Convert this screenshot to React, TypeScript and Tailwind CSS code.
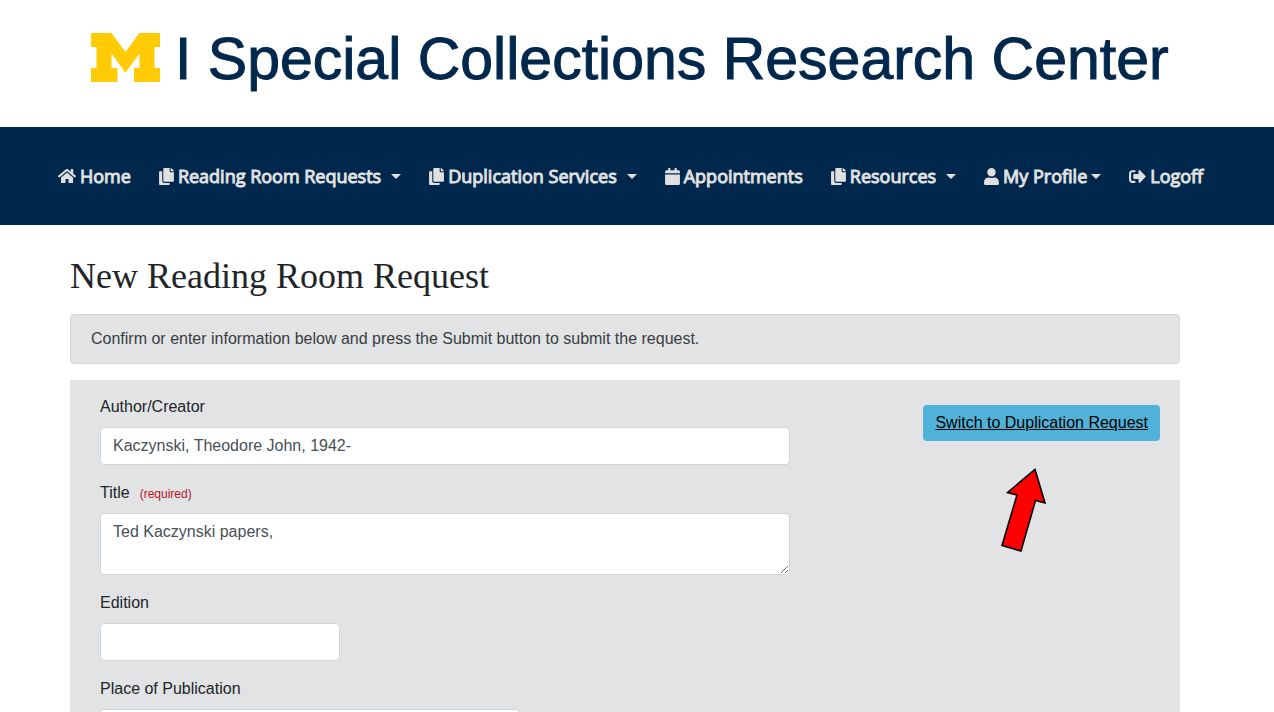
import React, { useState } from 'react';
import {
  FaHome,
  FaCopy,
  FaCalendar,
  FaUser,
  FaSignOutAlt,
} from 'react-icons/fa';
import type { IconType } from 'react-icons';

interface NavItem {
  label: string;
  icon: IconType;
  iconClass: string;
  caret?: string;
}

const navItems: NavItem[] = [
  { label: 'Home', icon: FaHome, iconClass: 'mr-1 h-4 w-[18px]' },
  { label: 'Reading Room Requests', icon: FaCopy, iconClass: 'mr-1 h-[17px] w-[15px]', caret: 'ml-[10px]' },
  { label: 'Duplication Services', icon: FaCopy, iconClass: 'mr-1 h-[17px] w-[15px]', caret: 'ml-[10px]' },
  { label: 'Appointments', icon: FaCalendar, iconClass: 'mr-1 h-[17px] w-[15px]' },
  { label: 'Resources', icon: FaCopy, iconClass: 'mr-1 h-[17px] w-[15px]', caret: 'ml-[10px]' },
  { label: 'My Profile', icon: FaUser, iconClass: 'mr-1 h-[17px] w-[15px]', caret: 'ml-1' },
  { label: 'Logoff', icon: FaSignOutAlt, iconClass: 'mr-1 h-[17px] w-[17px]' },
];

const inputClass =
  'block h-[38px] rounded border border-[#ced4da] bg-white px-3 text-base leading-6 text-[#495057]';

function BlockM() {
  return (
    <svg viewBox="0 0 69 49" className="h-[49px] w-[69px] shrink-0" aria-hidden="true">
      <path
        fill="#ffcb05"
        d="M0 0H20.500L34.500 19L48.500 0H69V14H63.500V35H69V49H43V35H48.500V20.500L34.500 39.700L20.500 20.500V35H26.500V49H0V35H5.500V14H0Z"
      />
    </svg>
  );
}

function SiteHeader() {
  return (
    <header className="flex h-[127px] items-start pl-[91px] pt-[33px]">
      <a href="#home" className="flex items-start gap-[15px] font-['Liberation_Sans',sans-serif] text-[59px] leading-[52px] whitespace-nowrap text-[#00274c]">
        <BlockM />
        <span className="[-webkit-text-stroke:1px_#00274c]">I Special Collections Research Center</span>
      </a>
    </header>
  );
}

function NavBar() {
  return (
    <nav className="flex h-[98px] items-center gap-7 bg-[#00274c] pl-[58px] font-['Open_Sans',sans-serif] text-lg text-[#e0e0e0]">
      {navItems.map((item) => {
        const Icon = item.icon;
        return (
          <a key={item.label} href="#" className="flex items-center whitespace-nowrap">
            <Icon className={item.iconClass} />
            <span className="[-webkit-text-stroke:1px_#e0e0e0]">{item.label}</span>
            {item.caret && (
              <span className={`${item.caret} border-x-[5px] border-t-[5px] border-x-transparent border-t-[#e0e0e0]`} />
            )}
          </a>
        );
      })}
    </nav>
  );
}

export default function App() {
  const [author, setAuthor] = useState('Kaczynski, Theodore John, 1942-');
  const [title, setTitle] = useState('Ted Kaczynski papers,');
  const [edition, setEdition] = useState('');
  const [place, setPlace] = useState('');

  return (
    <div className="h-screen overflow-hidden bg-white font-['Liberation_Sans',sans-serif] text-base leading-6 text-[#212529]">
      <SiteHeader />
      <NavBar />

      <main className="pl-[70px] pr-[94px] pt-[30px]">
        <h1 className="font-['Liberation_Serif',serif] text-4xl leading-[43px]">
          New Reading Room Request
        </h1>

        <div className="mt-4 rounded border border-[#d6d8db] bg-[#e2e3e5] px-5 py-3 text-[#383d41]">
          Confirm or enter information below and press the Submit button to submit the request.
        </div>

        <form className="mt-4 flex items-start justify-between bg-[#e2e3e5] pb-10 pl-[30px] pr-5">
          <div className="w-[690px] space-y-4 pt-[15px]">
            <div>
              <label htmlFor="author" className="mb-2 block">Author/Creator</label>
              <input
                id="author"
                value={author}
                onChange={(e) => setAuthor(e.target.value)}
                className={`${inputClass} w-full`}
              />
            </div>
            <div>
              <label htmlFor="title" className="mb-2 block">
                Title
                <span className="ml-[10px] text-xs text-[#b3132b]">(required)</span>
              </label>
              <textarea
                id="title"
                rows={2}
                value={title}
                onChange={(e) => setTitle(e.target.value)}
                className="block h-[62px] w-full rounded border border-[#ced4da] bg-white px-3 py-[6px] text-base leading-6 text-[#495057]"
              />
            </div>
            <div>
              <label htmlFor="edition" className="mb-2 block">Edition</label>
              <input
                id="edition"
                value={edition}
                onChange={(e) => setEdition(e.target.value)}
                className={`${inputClass} w-60`}
              />
            </div>
            <div>
              <label htmlFor="place" className="mb-2 block">Place of Publication</label>
              <input
                id="place"
                value={place}
                onChange={(e) => setPlace(e.target.value)}
                className={`${inputClass} w-[420px]`}
              />
            </div>
          </div>

          <div className="flex flex-col items-center pt-[25px]">
            <button type="button" className="h-9 rounded bg-[#50b2d8] px-3 text-black underline">
              Switch to Duplication Request
            </button>
            <svg viewBox="0 0 46 86" className="mr-[38px] mt-[26px] h-[86px] w-[46px]" aria-hidden="true">
              <path
                d="M35 2.500L45 36L35.500 33.500L21 84L2 78.500L17 28L7.500 25.500Z"
                fill="#ff0000"
                stroke="#000000"
                strokeWidth="1.600"
              />
            </svg>
          </div>
        </form>
      </main>
    </div>
  );
}
